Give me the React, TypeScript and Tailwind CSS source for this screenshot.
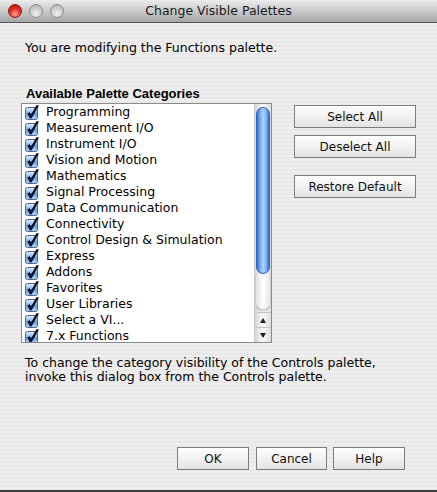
import React from "react";

const categories = [
  "Programming",
  "Measurement I/O",
  "Instrument I/O",
  "Vision and Motion",
  "Mathematics",
  "Signal Processing",
  "Data Communication",
  "Connectivity",
  "Control Design & Simulation",
  "Express",
  "Addons",
  "Favorites",
  "User Libraries",
  "Select a VI...",
  "7.x Functions",
];

function CheckBox() {
  return (
    <svg width="16" height="16" viewBox="0 0 16 16" className="shrink-0">
      <defs>
        <linearGradient id="cbFill" x1="0" y1="0" x2="0" y2="1">
          <stop offset="0" stopColor="#dcecfd" />
          <stop offset="0.45" stopColor="#8fbcf1" />
          <stop offset="0.5" stopColor="#5a96e3" />
          <stop offset="1" stopColor="#b6d8fc" />
        </linearGradient>
      </defs>
      <rect x="1.5" y="3.5" width="12" height="12" rx="2" fill="url(#cbFill)" stroke="#4f6380" />
      <path d="M3.4 9.2 L5.8 8.2 L7 10.6 L12.6 1 L15 1.7 L7.4 14.5 L5.8 14.5 Z" fill="#0c1222" />
    </svg>
  );
}

function Button({ label, className }: { label: string; className: string }) {
  return (
    <div
      className={`h-[23px] border border-[#7d7d7d] bg-[linear-gradient(#fefefe,#f1f1f1_50%,#e4e4e4)] flex items-center justify-center text-[12px] text-[#111] ${className}`}
    >
      {label}
    </div>
  );
}

function ScrollBar() {
  return (
    <div className="w-[17px] flex flex-col border-l border-[#c9c9c9] bg-[linear-gradient(to_right,#d6d6d6,#f7f7f7_45%,#f3f3f3_60%,#dedede)]">
      <div className="mx-[1px] mt-[3px] h-[167px] rounded-[7px] border border-[#2f62bb] bg-[linear-gradient(to_right,#3a6ec9,#74a8ee_25%,#b2d3fa_50%,#82b4f2_75%,#3a6ec9)]" />
      <div className="flex-1 mx-[1px] mb-[3px] rounded-b-[7px] bg-[linear-gradient(to_right,#e2e2e2,#ffffff_50%,#e6e6e6)] shadow-[0_2px_2px_rgba(0,0,0,0.2)]" />
      <div className="h-[15px] border-t border-[#c4c4c4] flex items-center justify-center">
        <div className="w-0 h-0 border-x-[3.5px] border-x-transparent border-b-[5px] border-b-[#222]" />
      </div>
      <div className="h-[15px] border-t border-[#c4c4c4] flex items-center justify-center">
        <div className="w-0 h-0 border-x-[3.5px] border-x-transparent border-t-[5px] border-t-[#222]" />
      </div>
    </div>
  );
}

export default function App() {
  return (
    <div className="w-[437px] h-[492px] flex flex-col overflow-hidden border-b-2 border-[#3c3c3c] font-['DejaVu_Sans',sans-serif] text-black">
      <div className="h-[23px] shrink-0 border-b border-[#555] bg-[linear-gradient(#ececec,#c9c9c9_50%,#a6a6a6)] grid grid-cols-[1fr_auto_1fr] items-center">
        <div className="flex items-center gap-[7px] pl-[8px]">
          <div className="w-[14px] h-[14px] rounded-full border border-[#8e1a12] bg-[radial-gradient(circle_at_50%_75%,#ffa49a,#e42d22_50%,#a30e08)]" />
          <div className="w-[14px] h-[14px] rounded-full border border-[#8f8f8f] bg-[radial-gradient(circle_at_50%_75%,#f2f2f2,#cbcbcb_55%,#a8a8a8)]" />
          <div className="w-[14px] h-[14px] rounded-full border border-[#8f8f8f] bg-[radial-gradient(circle_at_50%_75%,#f2f2f2,#cbcbcb_55%,#a8a8a8)]" />
        </div>
        <div className="text-[12.5px] text-[#1a1a1a]">Change Visible Palettes</div>
        <div />
      </div>

      <div className="flex-1 flex flex-col bg-[image:repeating-linear-gradient(180deg,#eeeeee_0px,#eeeeee_2px,#e8e8e8_2px,#e8e8e8_4px)]">
        <div className="pt-[17px] pl-[25px] text-[12.5px] leading-[16px]">
          You are modifying the Functions palette.
        </div>

        <div className="flex mt-[30px] pl-[21px]">
          <div className="flex flex-col w-[251px]">
            <div className="pl-[5px] font-['Liberation_Sans',sans-serif] font-bold text-[13px] leading-[16px]">
              Available Palette Categories
            </div>
            <div className="mt-[1px] h-[240px] border border-[#8a8a8a] bg-white flex">
              <div className="flex-1 overflow-hidden">
                {categories.map((name) => (
                  <div key={name} className="h-[16px] flex items-center pl-[2px] gap-[6px]">
                    <CheckBox />
                    <span className="text-[12.5px] leading-[16px] whitespace-nowrap">{name}</span>
                  </div>
                ))}
              </div>
              <ScrollBar />
            </div>
          </div>

          <div className="flex flex-col pt-[19px] ml-[22px] w-[122px]">
            <Button label="Select All" className="" />
            <Button label="Deselect All" className="mt-[7px]" />
            <Button label="Restore Default" className="mt-[17px]" />
          </div>
        </div>

        <div className="mt-[13px] pl-[25px] text-[12.5px] leading-[14px]">
          <div>To change the category visibility of the Controls palette,</div>
          <div>invoke this dialog box from the Controls palette.</div>
        </div>

        <div className="mt-[63px] flex justify-end pr-[32px]">
          <Button label="OK" className="w-[72px]" />
          <Button label="Cancel" className="w-[71px] ml-[7px]" />
          <Button label="Help" className="w-[72px] ml-[6px]" />
        </div>
      </div>
    </div>
  );
}
